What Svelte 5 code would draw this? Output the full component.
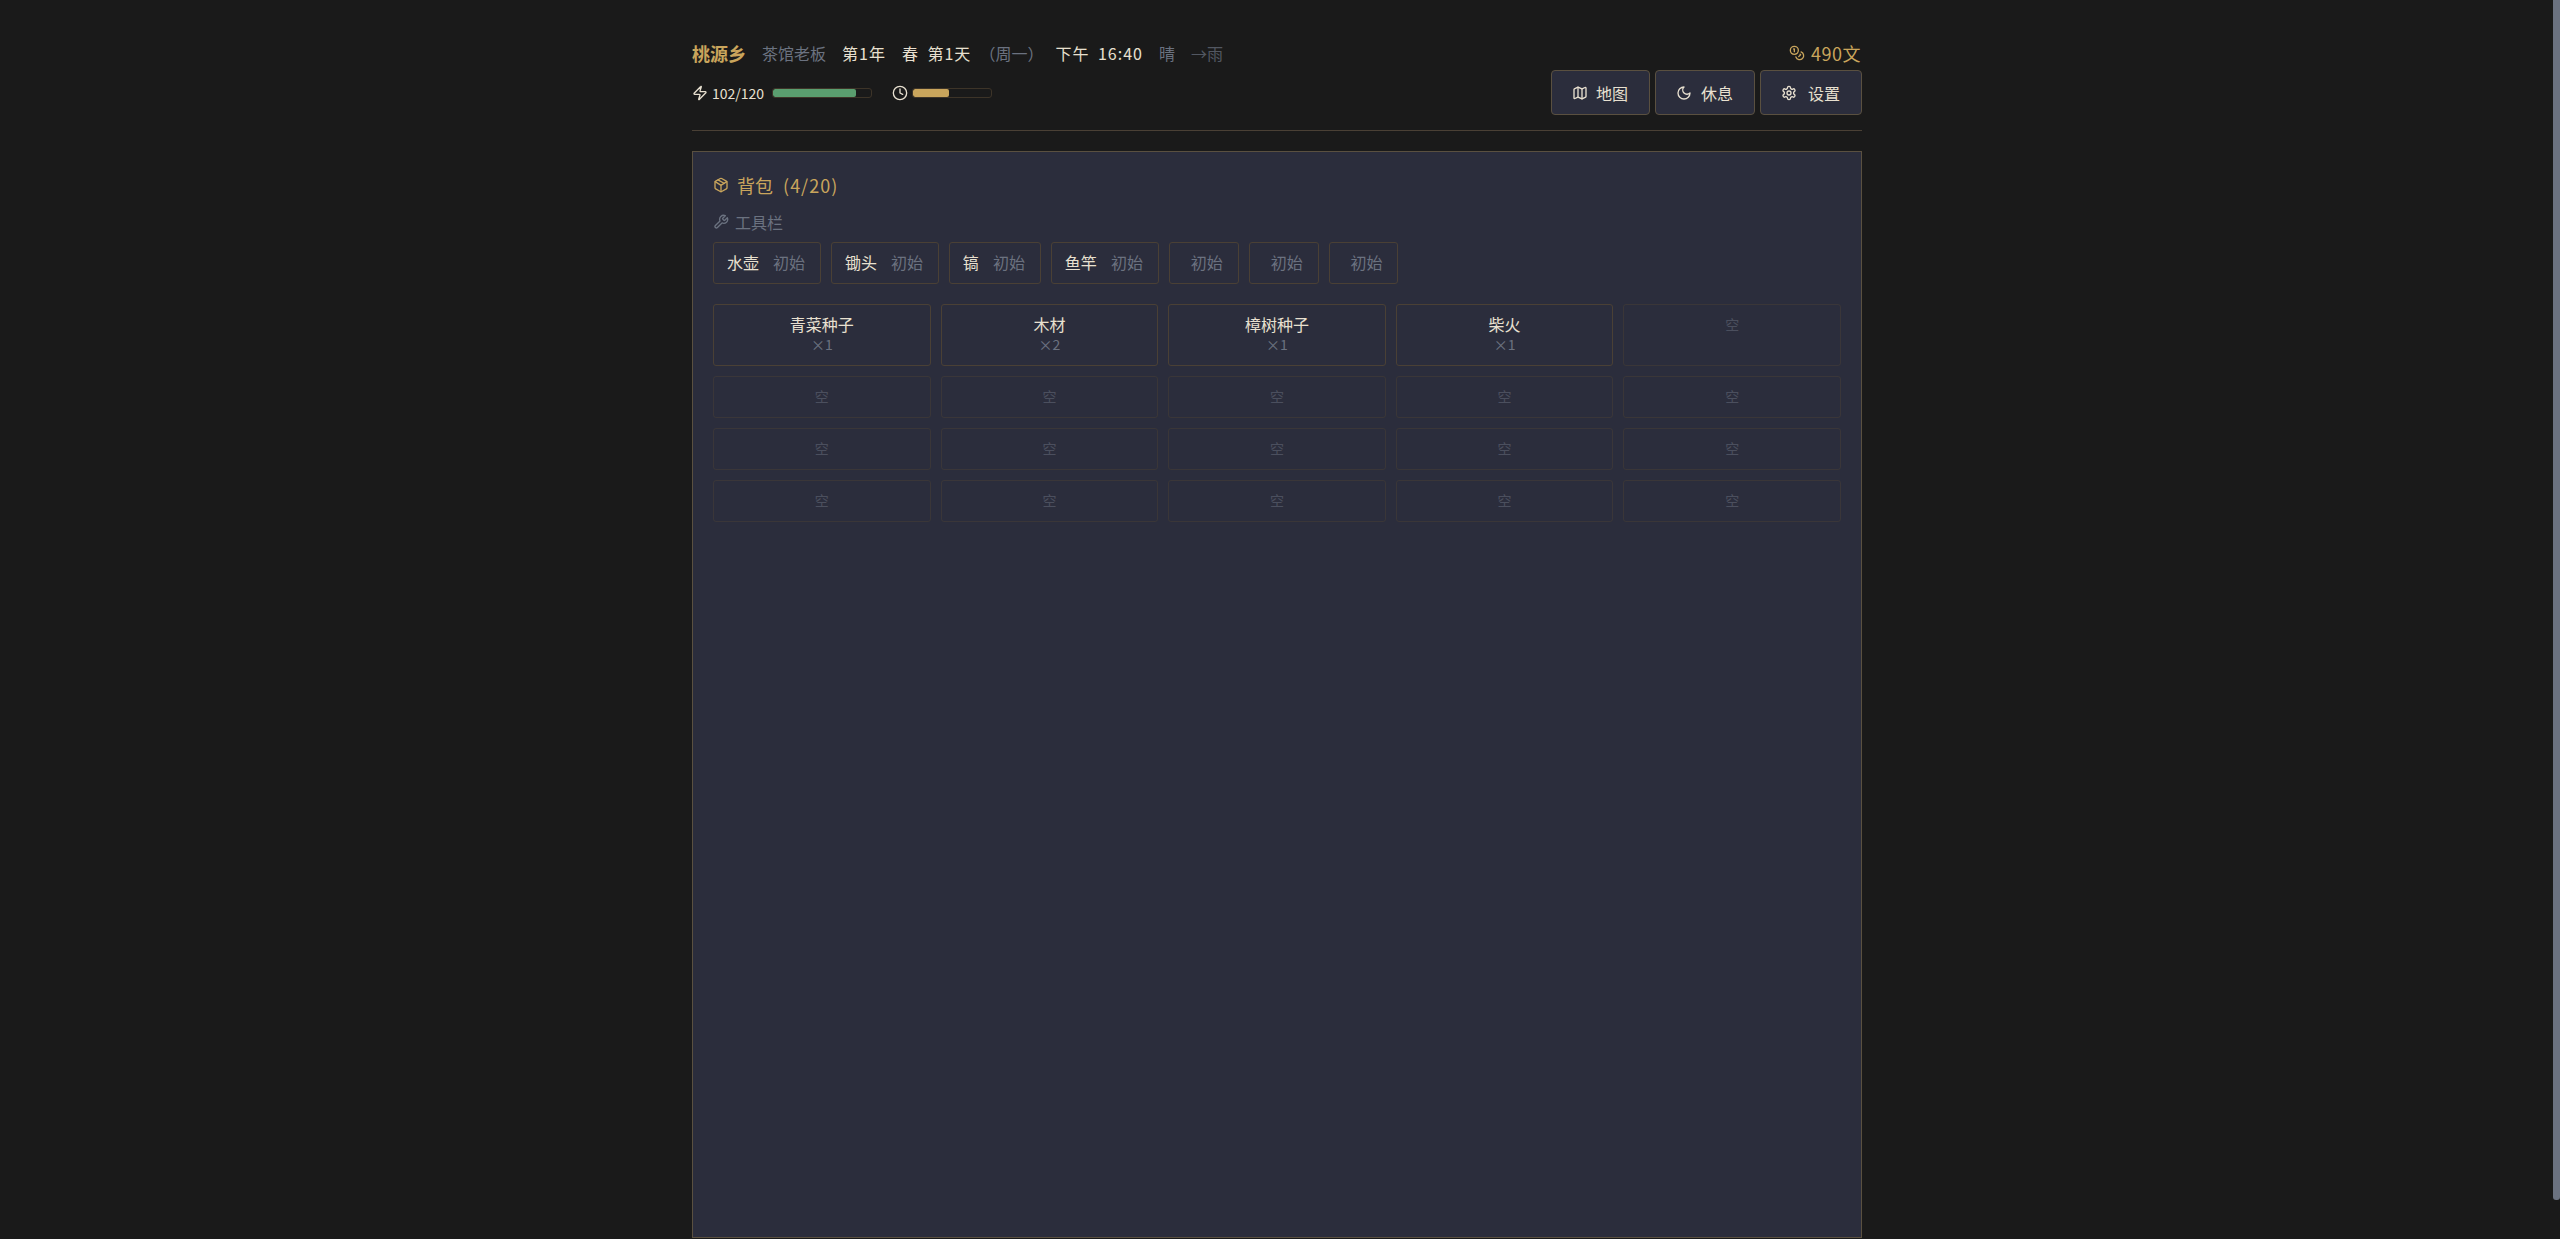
<script>
  const tools = [
    { name: '水壶', tier: '初始' },
    { name: '锄头', tier: '初始' },
    { name: '镐', tier: '初始' },
    { name: '鱼竿', tier: '初始' },
    { name: '', tier: '初始' },
    { name: '', tier: '初始' },
    { name: '', tier: '初始' }
  ];
  const items = [
    { name: '青菜种子', count: 1 },
    { name: '木材', count: 2 },
    { name: '樟树种子', count: 1 },
    { name: '柴火', count: 1 }
  ];
  const empties = Array.from({ length: 16 });
</script>

<div class="shell">
<div class="page">
  <header class="head">
    <div class="row-top">
      <div class="info">
        <span class="place">桃源乡</span>
        <span class="muted">茶馆老板</span>
        <span class="sp">第1年</span>
        <span class="sp">春 第1天</span>
        <span class="week">（周一）</span>
        <span class="sp clock">下午 16:40</span>
        <span class="weather">晴</span>
        <span class="next">→雨</span>
      </div>
      <div class="money">
        <svg class="ic" viewBox="0 0 24 24"><circle cx="8" cy="8" r="6"/><path d="M18.09 10.37A6 6 0 1 1 10.34 18"/><path d="M7 6h1v4"/><path d="m16.71 13.88.7.71-2.82 2.82"/></svg>
        <span>490文</span>
      </div>
    </div>
    <div class="row-low">
      <div class="stats">
        <div class="stat">
          <svg class="ic" viewBox="0 0 24 24"><path d="M4 14a1 1 0 0 1-.78-1.63l9.9-10.2a.5.5 0 0 1 .86.46l-1.92 6.02A1 1 0 0 0 13 10h7a1 1 0 0 1 .78 1.63l-9.9 10.2a.5.5 0 0 1-.86-.46l1.92-6.02A1 1 0 0 0 11 14z"/></svg>
          <span class="num">102/120</span>
          <div class="bar hp"><div class="fill green"></div></div>
        </div>
        <div class="stat">
          <svg class="ic" viewBox="0 0 24 24"><circle cx="12" cy="12" r="10"/><polyline points="12 6 12 12 16 14"/></svg>
          <div class="bar time"><div class="fill gold"></div></div>
        </div>
      </div>
      <div class="actions">
        <button class="b-map">
          <svg class="ic" viewBox="0 0 24 24"><path d="M14.106 5.553a2 2 0 0 0 1.788 0l3.659-1.83A1 1 0 0 1 21 4.619v12.764a1 1 0 0 1-.553.894l-4.553 2.277a2 2 0 0 1-1.788 0l-4.212-2.106a2 2 0 0 0-1.788 0l-3.659 1.83A1 1 0 0 1 3 19.381V6.618a1 1 0 0 1 .553-.894l4.553-2.277a2 2 0 0 1 1.788 0z"/><path d="M15 5.764v15"/><path d="M9 3.236v15"/></svg>
          地图
        </button>
        <button class="b-rest">
          <svg class="ic" viewBox="0 0 24 24"><path d="M12 3a6 6 0 0 0 9 9 9 9 0 1 1-9-9Z"/></svg>
          休息
        </button>
        <button class="b-set">
          <svg class="ic" viewBox="0 0 24 24"><path d="M12.22 2h-.44a2 2 0 0 0-2 2v.18a2 2 0 0 1-1 1.73l-.43.25a2 2 0 0 1-2 0l-.15-.08a2 2 0 0 0-2.73.73l-.22.38a2 2 0 0 0 .73 2.73l.15.1a2 2 0 0 1 1 1.72v.51a2 2 0 0 1-1 1.74l-.15.09a2 2 0 0 0-.73 2.73l.22.38a2 2 0 0 0 2.73.73l.15-.08a2 2 0 0 1 2 0l.43.25a2 2 0 0 1 1 1.73V20a2 2 0 0 0 2 2h.44a2 2 0 0 0 2-2v-.18a2 2 0 0 1 1-1.73l.43-.25a2 2 0 0 1 2 0l.15.08a2 2 0 0 0 2.73-.73l.22-.39a2 2 0 0 0-.73-2.73l-.15-.08a2 2 0 0 1-1-1.74v-.5a2 2 0 0 1 1-1.74l.15-.09a2 2 0 0 0 .73-2.73l-.22-.38a2 2 0 0 0-2.73-.73l-.15.08a2 2 0 0 1-2 0l-.43-.25a2 2 0 0 1-1-1.73V4a2 2 0 0 0-2-2z"/><circle cx="12" cy="12" r="3"/></svg>
          设置
        </button>
      </div>
    </div>
  </header>

  <main class="panel">
    <h2 class="title">
      <svg class="ic" viewBox="0 0 24 24"><path d="M11 21.73a2 2 0 0 0 2 0l7-4A2 2 0 0 0 21 16V8a2 2 0 0 0-1-1.73l-7-4a2 2 0 0 0-2 0l-7 4A2 2 0 0 0 3 8v8a2 2 0 0 0 1 1.73z"/><path d="M12 22V12"/><path d="m3.3 7 7.703 4.734a2 2 0 0 0 1.994 0L20.7 7"/><path d="m7.5 4.27 9 5.15"/></svg>
      <span>背包 <span class="cap">(4/20)</span></span>
    </h2>
    <div class="label">
      <svg class="ic" viewBox="0 0 24 24"><path d="M14.7 6.3a1 1 0 0 0 0 1.4l1.6 1.6a1 1 0 0 0 1.4 0l3.77-3.77a6 6 0 0 1-7.94 7.94l-6.91 6.91a2.12 2.12 0 0 1-3-3l6.91-6.91a6 6 0 0 1 7.94-7.94l-3.76 3.76z"/></svg>
      工具栏
    </div>
    <div class="tools">
      {#each tools as t}
        <div class="tool">
          {#if t.name}<span class="tool-name">{t.name}</span>{/if}
          <span class="tier">{t.tier}</span>
        </div>
      {/each}
    </div>
    <div class="grid">
      {#each items as it}
        <div class="cell">
          <div class="item-name">{it.name}</div>
          <div class="count">×{it.count}</div>
        </div>
      {/each}
      {#each empties as _}
        <div class="cell empty">空</div>
      {/each}
    </div>
  </main>
</div>
</div>
<div class="thumb"></div>

<style>
  :global(html) {
    background: #1a1a1a;
  }
  :global(body) {
    margin: 0;
    background: #1a1a1a;
    color: #e8e0d0;
    font-family: "Noto Sans CJK SC", "Liberation Sans", sans-serif;
    font-size: 16px;
  }
  .shell {
    padding-right: 6px;
  }
  .thumb {
    position: fixed;
    top: 0;
    right: 0;
    width: 7px;
    height: 1200px;
    background: #6b7280;
    border-radius: 0 0 3px 3px;
  }
  .page {
    box-sizing: border-box;
    width: 1170px;
    margin: 0 auto;
    padding: 40px 0;
  }
  .ic {
    width: 16px;
    height: 16px;
    flex: none;
    fill: none;
    stroke: currentColor;
    stroke-width: 2;
    stroke-linecap: round;
    stroke-linejoin: round;
  }
  .head {
    padding-bottom: 15px;
    border-bottom: 1px solid #4a4035;
    margin-bottom: 20px;
  }
  .row-top {
    display: flex;
    justify-content: space-between;
    align-items: center;
    height: 25px;
    margin-bottom: 5px;
  }
  .info {
    display: flex;
    align-items: center;
    gap: 16px;
  }
  .place {
    color: #c9a55c;
    font-size: 18px;
    font-weight: 700;
  }
  .muted {
    color: #6b7280;
  }
  .sp {
    letter-spacing: 1px;
    word-spacing: 4px;
  }
  .week {
    color: #6b7280;
    margin-left: -8px;
  }
  .clock {
    margin-left: -4px;
  }
  .weather {
    color: #6b7280;
    margin-left: 0;
  }
  .next {
    color: #6b7280;
    opacity: 0.7;
  }
  .money {
    display: flex;
    align-items: center;
    gap: 6px;
    padding-right: 1px;
    color: #c9a55c;
    font-size: 18px;
    letter-spacing: 0.5px;
  }
  .row-low {
    display: flex;
    justify-content: space-between;
    align-items: center;
  }
  .stats {
    display: flex;
    align-items: center;
    gap: 20px;
  }
  .stat {
    display: flex;
    align-items: center;
    gap: 4px;
  }
  .num {
    font-size: 14px;
  }
  .bar {
    box-sizing: border-box;
    height: 10px;
    border: 1px solid #3d3428;
    border-radius: 3px;
    background: #1a1a1a;
    overflow: hidden;
  }
  .bar.hp {
    width: 100px;
    margin-left: 4px;
  }
  .bar.time {
    width: 80px;
  }
  .fill {
    height: 100%;
    border-radius: 2px;
  }
  .green {
    width: 85%;
    background: #5a9e6f;
  }
  .gold {
    width: 46%;
    background: #c9a55c;
  }
  .actions {
    display: flex;
    gap: 5px;
  }
  button {
    box-sizing: border-box;
    display: flex;
    align-items: center;
    height: 45px;
    padding: 0 21px 0 20px;
    background: #2b2d3c;
    border: 1px solid #5a5040;
    border-radius: 4px;
    color: #e8e0d0;
    font: inherit;
  }
  .b-map {
    gap: 8px;
  }
  .b-rest {
    gap: 9px;
  }
  .b-set {
    gap: 11px;
  }
  .panel {
    box-sizing: border-box;
    min-height: 1087px;
    padding: 20px;
    background: #2b2d3c;
    border: 1px solid #5a5040;
  }
  .title {
    display: flex;
    align-items: center;
    gap: 8px;
    margin: 0 0 13px;
    color: #c9a55c;
    font-size: 18px;
    font-weight: 400;
    line-height: 26px;
    word-spacing: 6px;
  }
  .cap {
    letter-spacing: 1px;
  }
  .label {
    display: flex;
    align-items: center;
    gap: 6px;
    margin-bottom: 9px;
    color: #6b7280;
    line-height: 22px;
  }
  .tools {
    display: flex;
    gap: 10px;
    margin-bottom: 20px;
  }
  .tool {
    box-sizing: border-box;
    display: flex;
    align-items: center;
    height: 42px;
    padding: 0 14.8px 2px 13px;
    border: 1px solid #4a4035;
    border-radius: 3px;
  }
  .tool-name {
    margin-right: 6px;
  }
  .tier {
    margin-left: 8.1px;
    color: #6b7280;
  }
  .grid {
    display: grid;
    grid-template-columns: repeat(5, 1fr);
    gap: 10px;
  }
  .cell {
    box-sizing: border-box;
    padding: 9px 10px 11px;
    border: 1px solid #4a4035;
    border-radius: 3px;
    text-align: center;
    line-height: 20px;
  }
  .count {
    color: #6b7280;
    font-size: 14px;
  }
  .empty {
    color: #6b7280;
    font-size: 14px;
    opacity: 0.5;
  }
</style>
